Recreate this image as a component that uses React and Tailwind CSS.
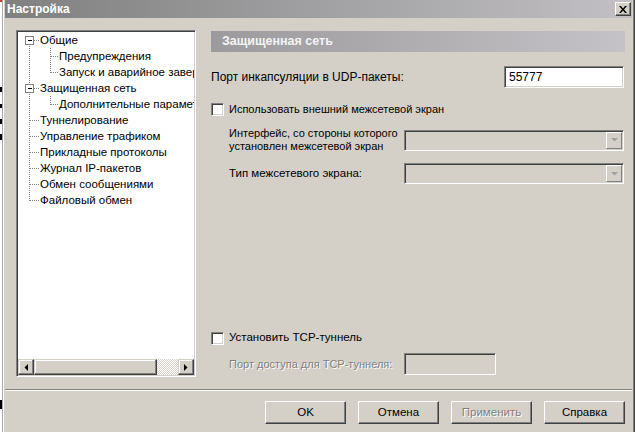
import React from "react";

const FONT = "font-['Liberation_Sans',Arial,sans-serif]";

// Classic 3D borders
const sunken =
  "border border-t-[#808080] border-l-[#808080] border-r-white border-b-white shadow-[inset_1px_1px_0_#404040,inset_-1px_-1px_0_#d4d0c8]";
const raised =
  "border border-t-white border-l-white border-r-[#404040] border-b-[#404040] shadow-[inset_-1px_-1px_0_#808080,inset_1px_1px_0_#d4d0c8]";
const raisedSoft =
  "border border-t-[#d4d0c8] border-l-[#d4d0c8] border-r-[#404040] border-b-[#404040] shadow-[inset_-1px_-1px_0_#808080,inset_1px_1px_0_#ffffff]";

const treeItems = [
  { level: 0, label: "Общие", expander: true, first: true },
  { level: 1, label: "Предупреждения" },
  { level: 1, label: "Запуск и аварийное завершение", lastChild: true },
  { level: 0, label: "Защищенная сеть", expander: true },
  { level: 1, label: "Дополнительные параметры", lastChild: true },
  { level: 0, label: "Туннелирование" },
  { level: 0, label: "Управление трафиком" },
  { level: 0, label: "Прикладные протоколы" },
  { level: 0, label: "Журнал IP-пакетов" },
  { level: 0, label: "Обмен сообщениями" },
  { level: 0, label: "Файловый обмен", last: true },
];

function Dotted({ x1, y1, x2, y2 }) {
  return (
    <line
      x1={x1}
      y1={y1}
      x2={x2}
      y2={y2}
      stroke="#808080"
      strokeWidth="1"
      strokeDasharray="1 1"
      shapeRendering="crispEdges"
    />
  );
}

function TreeRow({ item }) {
  const { level, label, expander, first, last, lastChild } = item;
  return (
    <div className="flex h-[16px] items-center whitespace-nowrap">
      <svg width={level === 0 ? 22 : 41} height="16" className="shrink-0">
        {level === 0 && expander && (
          <>
            {!first && <Dotted x1={11.5} y1={0} x2={11.5} y2={4} />}
            <Dotted x1={11.5} y1={12} x2={11.5} y2={16} />
            <Dotted x1={16} y1={8.5} x2={21} y2={8.5} />
            <rect x="7.5" y="4.5" width="8" height="8" fill="#fff" stroke="#808080" shapeRendering="crispEdges" />
            <line x1="9.5" y1="8.5" x2="14" y2="8.5" stroke="#000" shapeRendering="crispEdges" />
          </>
        )}
        {level === 0 && !expander && (
          <>
            <Dotted x1={11.5} y1={0} x2={11.5} y2={last ? 9 : 16} />
            <Dotted x1={12} y1={8.5} x2={21} y2={8.5} />
          </>
        )}
        {level === 1 && (
          <>
            <Dotted x1={11.5} y1={0} x2={11.5} y2={16} />
            <Dotted x1={32.5} y1={0} x2={32.5} y2={lastChild ? 9 : 16} />
            <Dotted x1={33} y1={8.5} x2={40} y2={8.5} />
          </>
        )}
      </svg>
      <span className="text-[11.5px] leading-[16px] text-black">{label}</span>
    </div>
  );
}

function Arrow({ dir }) {
  return (
    <svg width="4" height="7" viewBox="0 0 4 7">
      {dir === "left" ? (
        <polygon points="4,0 4,7 0.5,3.5" fill="#000" />
      ) : (
        <polygon points="0,0 0,7 3.5,3.5" fill="#000" />
      )}
    </svg>
  );
}

function Tree() {
  return (
    <div className={`ml-[11px] flex h-[347px] w-[180px] shrink-0 flex-col bg-white p-[1px] ${sunken}`}>
      <div className="flex-1 overflow-hidden">
        {treeItems.map((it) => (
          <TreeRow key={it.label} item={it} />
        ))}
      </div>
      <div className="flex h-[16px] shrink-0">
        <div className={`flex w-[16px] items-center justify-center bg-[#d4d0c8] ${raisedSoft}`}>
          <Arrow dir="left" />
        </div>
        <div className={`w-[123px] bg-[#d4d0c8] ${raisedSoft}`} />
        <div className="flex-1 bg-[repeating-conic-gradient(#d4d0c8_0%_25%,#ffffff_0%_50%)] bg-[length:2px_2px]" />
        <div className={`flex w-[16px] items-center justify-center bg-[#d4d0c8] ${raisedSoft}`}>
          <Arrow dir="right" />
        </div>
      </div>
    </div>
  );
}

function Checkbox() {
  return <div className={`h-[13px] w-[13px] shrink-0 bg-white ${sunken}`} />;
}

function Combo() {
  return (
    <div className={`flex h-[21px] w-[220px] shrink-0 items-stretch justify-end bg-[#d4d0c8] p-[1px] ${sunken}`}>
      <div className="flex w-[16px] items-center justify-center border border-t-white border-l-white border-r-[#808080] border-b-[#808080] bg-[#d4d0c8]">
        <svg width="7" height="4" viewBox="0 0 7 4">
          <polygon points="0,0 7,0 3.5,3.5" fill="#a0a0a0" />
        </svg>
      </div>
    </div>
  );
}

function Button({ children, disabled }) {
  return (
    <div
      className={`flex h-[23px] w-[81px] items-center justify-center bg-[#d4d0c8] text-[11.5px] ${raised} ${
        disabled ? "text-[#808080] [text-shadow:1px_1px_0_#ffffff]" : "text-black"
      }`}
    >
      {children}
    </div>
  );
}

function DesktopEdge() {
  // fragments of the window lying behind
  return (
    <svg width="2" height="432" className="shrink-0 bg-white">
      <rect x="0" y="0" width="2" height="2" fill="#c04030" />
      <rect x="0" y="87" width="2" height="5" fill="#000" />
      <rect x="0" y="104" width="2" height="4" fill="#000" />
      <rect x="0" y="119" width="2" height="5" fill="#000" />
      <rect x="0" y="134" width="2" height="6" fill="#000" />
      <rect x="0" y="400" width="2" height="9" fill="#000" />
    </svg>
  );
}

export default function App() {
  return (
    <div className={`flex h-[432px] w-[635px] overflow-hidden bg-white ${FONT}`}>
      <DesktopEdge />
      <div className="flex min-w-0 flex-1 border-l border-r border-l-[#a8a8a8] border-r-[#404040]">
        <div className="flex min-w-0 flex-1 flex-col border-l border-r border-l-white border-r-[#808080] bg-[#d4d0c8] pl-[1px] pr-[1px]">
          {/* caption */}
          <div className="flex h-[18px] shrink-0 items-center justify-between bg-gradient-to-r from-[#808080] to-[#c2c0c4] pl-[2px] pr-[1px]">
            <span className="text-[12px] font-bold leading-none text-white">Настройка</span>
            <div className={`flex h-[14px] w-[16px] items-center justify-center bg-[#d4d0c8] ${raised}`}>
              <svg width="8" height="7" viewBox="0 0 8 7">
                <path d="M0 0h2l2 2.5L6 0h2L5 3.5 8 7H6L4 4.5 2 7H0l3-3.5z" fill="#000" />
              </svg>
            </div>
          </div>

          <div className="mt-[12px] flex h-[347px] shrink-0">
            <Tree />

            <div className="ml-[15px] flex w-[414px] flex-col whitespace-nowrap text-[11.5px] text-black">
              <div className="mt-[1px] flex h-[21px] shrink-0 items-center bg-gradient-to-r from-[#9c9a9c] to-[#c4c2c6] pl-[11px]">
                <span className="text-[12.5px] font-bold text-[#f4f4f4]">Защищенная сеть</span>
              </div>

              <div className="mt-[14px] flex h-[22px] items-center justify-between">
                <span className="text-[12px]">Порт инкапсуляции в UDP-пакеты:</span>
                <div className={`mr-[1px] flex h-[22px] w-[120px] items-center bg-white pl-[4px] text-[12px] ${sunken}`}>
                  55777
                </div>
              </div>

              <div className="mt-[13px] flex h-[16px] items-center gap-[5px]">
                <Checkbox />
                <span className="text-[11px]">Использовать внешний межсетевой экран</span>
              </div>

              <div className="ml-[18px] mt-[10px] flex items-center">
                <span className="w-[175px] shrink-0 text-[11px] leading-[13px]">
                  Интерфейс, со стороны которого
                  <br />
                  установлен межсетевой экран
                </span>
                <Combo />
              </div>

              <div className="ml-[18px] mt-[10px] flex items-center">
                <span className="w-[175px] shrink-0">Тип межсетевого экрана:</span>
                <Combo />
              </div>

              <div className="mt-auto flex h-[16px] items-center gap-[5px]">
                <Checkbox />
                <span>Установить TCP-туннель</span>
              </div>

              <div className="mb-[2px] ml-[18px] mt-[7px] flex items-center">
                <span className="w-[175px] shrink-0 text-[11px] text-[#808080] [text-shadow:1px_1px_0_#ffffff]">
                  Порт доступа для TCP-туннеля:
                </span>
                <div className={`h-[22px] w-[92px] bg-[#d4d0c8] ${sunken}`} />
              </div>
            </div>
          </div>

          {/* separator */}
          <div className="mt-[12px] h-[2px] shrink-0 border-t border-b border-t-[#808080] border-b-white" />

          <div className="mt-[10px] flex justify-end gap-[12px] pr-[7px]">
            <Button>OK</Button>
            <Button>Отмена</Button>
            <Button disabled>Применить</Button>
            <Button>Справка</Button>
          </div>
        </div>
      </div>
    </div>
  );
}
